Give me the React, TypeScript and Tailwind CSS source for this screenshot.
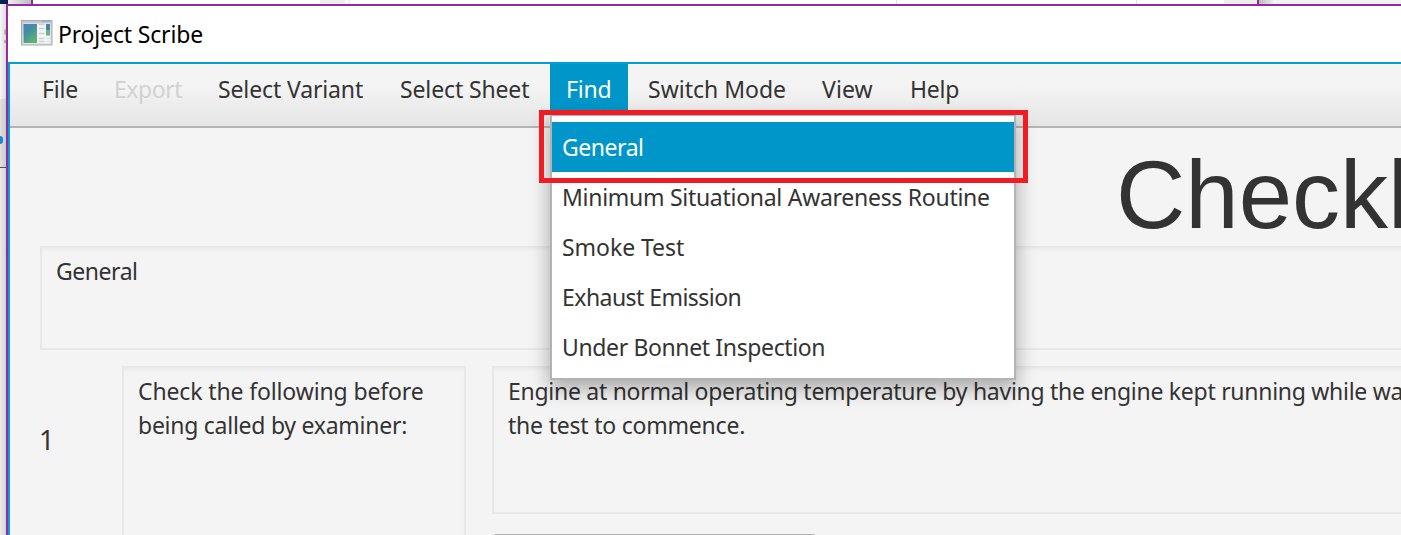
import type { ReactNode } from "react";

const menus = [
  { label: "File", cls: "w-[68px] text-[#333] tracking-[-0.15px]" },
  { label: "Export", cls: "w-[100px] text-[#d2d2d2] tracking-[-0.45px]" },
  { label: "Select Variant", cls: "w-[178px] text-[#333] tracking-[-0.13px]" },
  { label: "Select Sheet", cls: "w-[162px] text-[#333] tracking-[-0.13px]" },
  { label: "Find", cls: "w-[78px] bg-[#0096c9] text-white tracking-[-0.2px]" },
  { label: "Switch Mode", cls: "w-[170px] text-[#333]" },
  { label: "View", cls: "w-[84px] text-[#333] tracking-[0.1px]" },
  { label: "Help", cls: "w-[82px] text-[#333] tracking-[-0.2px]" },
];

const findItems = [
  { label: "General", cls: "bg-[#0096c9] text-white tracking-[-0.46px]" },
  { label: "Minimum Situational Awareness Routine", cls: "tracking-[-0.28px]" },
  { label: "Smoke Test", cls: "tracking-[-0.05px]" },
  { label: "Exhaust Emission", cls: "tracking-[-0.54px]" },
  { label: "Under Bonnet Inspection", cls: "tracking-[-0.37px]" },
];

function AppIcon() {
  return (
    <svg className="h-[26px] w-[32px] shrink-0" viewBox="0 0 32 26">
      <defs>
        <linearGradient id="pane" x1="0" y1="0" x2="0.6" y2="1">
          <stop offset="0" stopColor="#3f7fae" />
          <stop offset="0.5" stopColor="#43939a" />
          <stop offset="1" stopColor="#5fb473" />
        </linearGradient>
        <linearGradient id="frame" x1="0" y1="0" x2="0" y2="1">
          <stop offset="0" stopColor="#c3c8cc" />
          <stop offset="1" stopColor="#d6d9dc" />
        </linearGradient>
      </defs>
      <rect x="0.5" y="0.5" width="30.5" height="24.5" fill="url(#frame)" stroke="#a9adb1" />
      <rect x="2" y="3.5" width="27.5" height="20" fill="#f4f5f6" />
      <path d="M21 1.5h8" stroke="#a3adb5" />
      <rect x="2.5" y="4" width="13.5" height="19" fill="url(#pane)" />
      <path d="M2.5 14Q8 7 16 6V4H2.5z" fill="#4a88bb" opacity=".5" />
      <path d="M18 4.5h5.5M18 8.5h5.5M18 13.5h5.5M18 18.5h5.5M18 21.5h5.5" stroke="#cdd0d3" strokeWidth="1.6" />
      <rect x="25" y="4" width="4" height="6" fill="#4483ad" />
      <rect x="25" y="10" width="4" height="5.5" fill="#69b383" />
      <path d="M25 18.5h4M25 21.5h4" stroke="#dcdfe1" />
    </svg>
  );
}

function Area({ className, children }: { className: string; children?: ReactNode }) {
  return (
    <div
      className={`relative overflow-hidden whitespace-pre border-2 border-[#e8e8e8] px-3.5 py-1.5 leading-[34px] shadow-[inset_0_3px_3px_-1px_#ebebeb] ${className}`}
    >
      <i className="absolute -left-0.5 -top-0.5 h-px w-0.5 bg-[#b9b9b9]" />
      <i className="absolute -bottom-0.5 -left-0.5 h-px w-0.5 bg-[#c9c9c9]" />
      <i className="absolute -right-0.5 -top-0.5 h-px w-0.5 bg-[#b9b9b9]" />
      {children}
    </div>
  );
}

function LeftEdge() {
  return (
    <div className="flex w-1.5 shrink-0 flex-col">
      <div className="h-[95px] bg-linear-to-r from-[#f7f7f7] to-[#dadada] pt-[25px]">
        <div className="ml-1 h-1.5 w-0.5 rounded-l bg-[#c9ad8d]" />
        <div className="ml-1 mt-[5px] h-[3px] w-0.5 bg-[#c3a98f]" />
      </div>
      <div className="h-[68px] bg-linear-to-r from-[#e2e2e2] to-[#cbcbcb] pt-[37px]">
        <div className="h-2 w-[3px] rounded-r-full bg-[#1c86cf]" />
      </div>
      <div className="h-px bg-[#555]" />
      <div className="grow bg-linear-to-r from-[#ececec] to-[#d2d2d2]" />
    </div>
  );
}

function BackgroundTop() {
  return (
    <div className="flex h-1 shrink-0">
      <div className="w-2 bg-[#06234f]" />
      <div className="w-[23px] bg-linear-to-r from-[#eee] to-[#bdbdbd]" />
      <div className="w-0.5 bg-[#932ba0]" />
      <div className="w-[287px] bg-white" />
      <div className="w-[25px] bg-[#eee]" />
      <div className="w-[3px] bg-white" />
      <div className="w-0.5 bg-[#eee]" />
      <div className="w-[546px] bg-white" />
      <div className="w-px bg-[#ddd]" />
      <div className="w-[239px] bg-white" />
      <div className="w-px bg-[#ddd]" />
      <div className="w-[87px] bg-white" />
      <div className="w-[33px] bg-[#eee]" />
      <div className="w-0.5 bg-[#932ba0]" />
      <div className="w-4 bg-linear-to-r from-[#bcbcbc] to-[#f3f3f3]" />
      <div className="grow bg-[#f3f3f3]" />
    </div>
  );
}

function FindMenu() {
  return (
    <div className="absolute left-[550px] top-[114px] h-[266px] w-[466px] border-2 border-[#b3b3b3] bg-white py-1.5 shadow-[0_8px_18px_1px_rgba(0,0,0,0.3)]">
      {findItems.map((item) => (
        <div key={item.label} className={`h-[50px] whitespace-nowrap pl-2.5 leading-[50px] ${item.cls}`}>
          {item.label}
        </div>
      ))}
    </div>
  );
}

export default function App() {
  return (
    <div className="relative flex h-[535px] w-[1401px] flex-col overflow-hidden bg-[#f4f4f4] font-['Noto_Sans',sans-serif] text-[23px] text-[#333]">
      <BackgroundTop />
      <div className="flex min-h-0 grow">
        <LeftEdge />
        <div className="flex min-w-0 grow flex-col border-l-2 border-t-2 border-[#932ba0]">
          <header className="flex h-14 shrink-0 items-center gap-[5px] bg-white pl-[13px] text-black">
            <div className="-mt-[3px]"><AppIcon /></div>
            <h1 className="leading-[54px] tracking-[-0.17px]">Project Scribe</h1>
          </header>
          <div className="flex min-h-0 grow flex-col border-l-2 border-t-2 border-[#009fd6]">
            <nav className="flex h-16 shrink-0 gap-1 border-b-2 border-[#b4b4b4] bg-linear-to-b from-[#f4f4f4] from-35% to-[#e5e5e5] pl-4">
              {menus.map((m) => (
                <div key={m.label} className={`h-[52px] whitespace-nowrap pl-4 leading-[50px] ${m.cls}`}>
                  {m.label}
                </div>
              ))}
            </nav>
            <main className="flex min-h-0 grow flex-col pl-[30px]">
              <div className="h-[118px] shrink-0 pl-[1076px] pt-3 font-['Liberation_Sans',sans-serif] text-[96px] leading-[110px] text-[#333]">
                Checkl
              </div>
              <Area className="h-[104px] shrink-0 border-r-0 tracking-[-0.46px]">General</Area>
              <div className="mt-4 flex h-[300px] shrink-0">
                <div className="w-[82px] shrink-0 -indent-px pt-[52px] text-[27px] leading-[44px]">1</div>
                <Area className="w-[344px] shrink-0">
                  <div className="tracking-[-0.13px]">Check the following before</div>
                  <div className="tracking-[-0.26px]">being called by examiner:</div>
                </Area>
                <div className="ml-[26px] flex min-w-0 grow flex-col gap-5">
                  <Area className="h-[148px] shrink-0 border-r-0">
                    <div className="tracking-[-0.28px]">
                      Engine at normal operating temperature by having the engine kept running while wa
                    </div>
                    <div className="tracking-[-0.21px]">the test to commence.</div>
                  </Area>
                  <div className="h-12 w-[325px] shrink-0 rounded-sm border border-[#b0b0b0] bg-[#e8e8e8]" />
                </div>
              </div>
            </main>
          </div>
        </div>
      </div>
      <FindMenu />
      <div className="absolute left-[539px] top-[110px] h-[73px] w-[489px] border-[5px] border-[#ef1c24]" />
    </div>
  );
}
